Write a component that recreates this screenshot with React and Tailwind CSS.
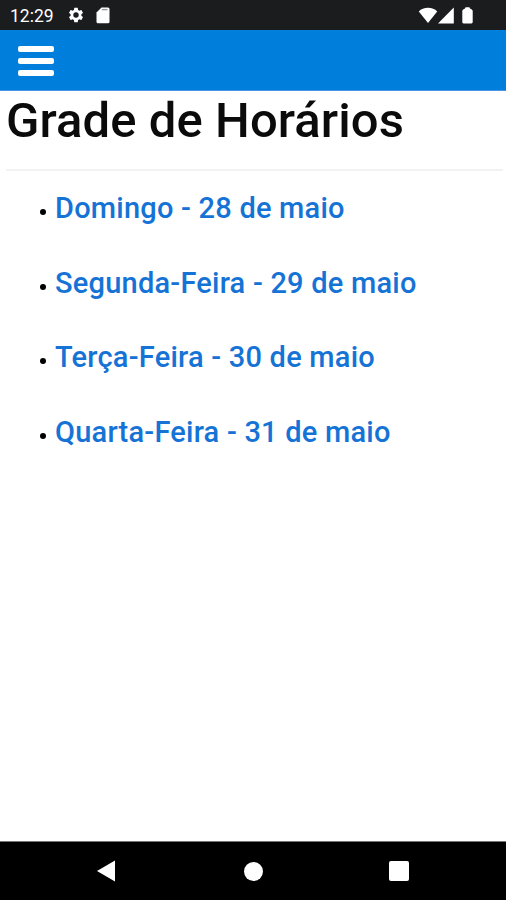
import React from 'react';

const days = [
  { id: 1, label: 'Domingo - 28 de maio' },
  { id: 2, label: 'Segunda-Feira - 29 de maio' },
  { id: 3, label: 'Terça-Feira - 30 de maio' },
  { id: 4, label: 'Quarta-Feira - 31 de maio' },
];

const StatusBar = () => (
  <div className="h-[30px] shrink-0 bg-[#1b1c1e] flex items-center justify-between pl-[10px] pr-[33px] text-white">
    <div className="flex items-center">
      <span className="w-[57px] text-[17.5px] leading-[30px] pt-[2px]">12:29</span>
      <svg className="w-[18px] h-[18px]" viewBox="0 0 24 24" fill="currentColor">
        <path d="M19.14 12.94c.04-.3.06-.61.06-.94 0-.32-.02-.64-.07-.94l2.03-1.58a.49.49 0 0 0 .12-.61l-1.92-3.32a.488.488 0 0 0-.59-.22l-2.39.96c-.5-.38-1.03-.7-1.62-.94l-.36-2.54a.484.484 0 0 0-.48-.41h-3.84c-.24 0-.43.17-.47.41l-.36 2.54c-.59.24-1.13.57-1.62.94l-2.39-.96c-.22-.08-.47 0-.59.22L2.74 8.87c-.12.21-.08.47.12.61l2.03 1.58c-.05.3-.09.63-.09.94s.02.64.07.94l-2.03 1.58a.49.49 0 0 0-.12.61l1.92 3.32c.12.22.37.29.59.22l2.39-.96c.5.38 1.03.7 1.62.94l.36 2.54c.05.24.24.41.48.41h3.84c.24 0 .44-.17.47-.41l.36-2.54c.59-.24 1.13-.56 1.62-.94l2.39.96c.22.08.47 0 .59-.22l1.92-3.32c.12-.22.07-.47-.12-.61l-2.01-1.58zM12 15.6A3.6 3.6 0 1 1 12 8.4a3.6 3.6 0 0 1 0 7.2z" />
      </svg>
      <svg className="ml-[11px] w-[14px] h-[17px]" viewBox="0 0 14 17">
        <path d="M5.5.5H12a1.5 1.5 0 0 1 1.5 1.5v12.8a1.5 1.5 0 0 1-1.5 1.5H2a1.5 1.5 0 0 1-1.5-1.5V5.5z" fill="#fff" />
        <path d="M5.8 2.6h5.8" stroke="#999" strokeWidth="1.4" />
      </svg>
    </div>
    <div className="flex items-center">
      <svg className="w-[20px] h-[17px]" viewBox="0 0 20 17" fill="currentColor">
        <path d="M10 16L.8 4.6C3.1 2 6.2.8 10 .8s6.900 1.200 9.200 3.800z" />
      </svg>
      <svg className="w-[16px] h-[17px]" viewBox="0 0 16 17" fill="currentColor">
        <path d="M15.8.6v15.8H0z" />
      </svg>
      <svg className="ml-[8px] w-[11px] h-[17px]" viewBox="0 0 11 17" fill="currentColor">
        <path d="M3.6.3h3.8l.6 1.200 1.800 1.100c.6.4.9.9.9 1.500v11c0 .8-.5 1.300-1.300 1.300H1.600c-.8 0-1.300-.5-1.300-1.300v-11c0-.6.3-1.100.9-1.500L3 1.500z" />
      </svg>
    </div>
  </div>
);

const Header = () => (
  <header className="h-[61px] shrink-0 bg-[#007edb] border-b border-[#4a94e4] pl-[18px] pt-[16px]">
    <button className="w-[36px] flex flex-col gap-[6px]" aria-label="Menu">
      <span className="h-[6px] w-full rounded-[2px] bg-white" />
      <span className="h-[6px] w-full rounded-[2px] bg-white" />
      <span className="h-[6px] w-full rounded-[2px] bg-white" />
    </button>
  </header>
);

const NavBar = () => (
  <nav className="h-[59px] shrink-0 bg-black border-t border-[#777] flex items-center pl-[97px]">
    <svg className="w-[18px] h-[22px]" viewBox="0 0 18 22" fill="#fff">
      <path d="M18 .5v21L0 11z" />
    </svg>
    <span className="ml-[129px] w-[19px] h-[19px] rounded-full bg-white" />
    <span className="ml-[126px] w-[20px] h-[20px] rounded-[2px] bg-white" />
  </nav>
);

const App = () => {
  return (
    <div className="h-screen bg-white flex flex-col font-['Roboto',sans-serif]">
      <StatusBar />
      <Header />
      <main className="flex-1 pl-[6px] pr-[3px]">
        <h1 className="h-[78px] text-[49px] leading-[60px] font-medium tracking-[0.08px] text-[#0b0b0c] whitespace-nowrap">
          Grade de Horários
        </h1>
        <hr className="border-t-2 border-[#f2f2f2]" />
        <ul className="pt-[20px]">
          {days.map((day) => (
            <li key={day.id} className="h-[74.6px] flex items-start pl-[34px]">
              <span className="mt-[18px] mr-[9px] w-[6px] h-[6px] rounded-full bg-black" />
              <a className="text-[29px] leading-[35px] font-medium tracking-[0.22px] text-[#1673d6] whitespace-nowrap">{day.label}</a>
            </li>
          ))}
        </ul>
      </main>
      <NavBar />
    </div>
  );
};

export default App;
